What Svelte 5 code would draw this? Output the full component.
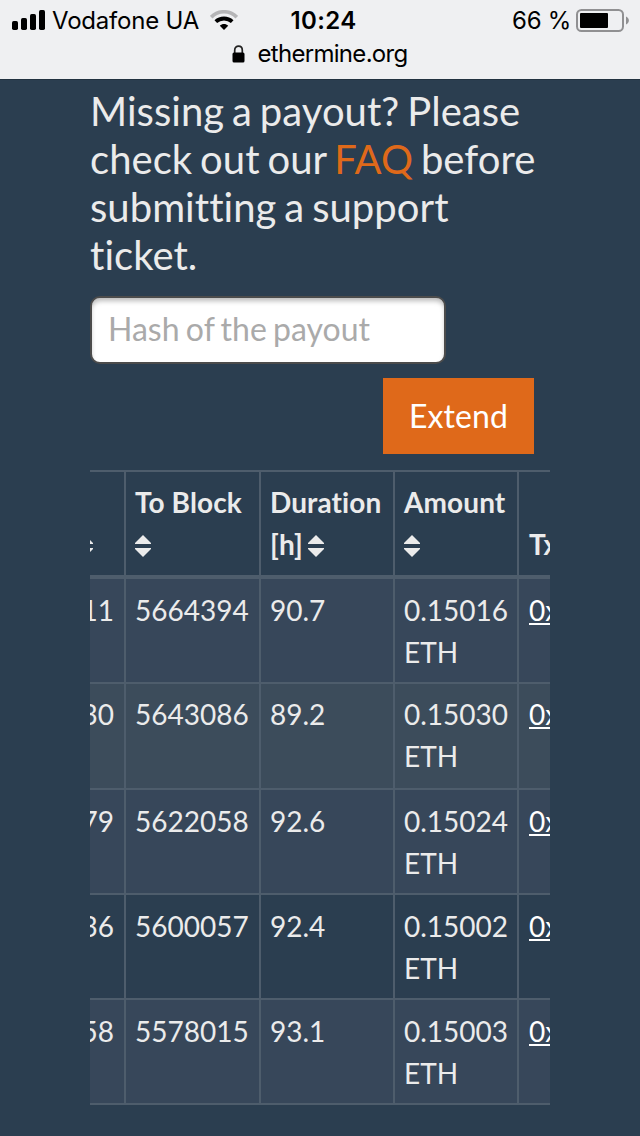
<script>
  const rows = [
    { from: "11", to: "5664394", duration: "90.7", amount: "0.15016", shade: "odd" },
    { from: "30", to: "5643086", duration: "89.2", amount: "0.15030", shade: "hovered" },
    { from: "79", to: "5622058", duration: "92.6", amount: "0.15024", shade: "odd" },
    { from: "36", to: "5600057", duration: "92.4", amount: "0.15002", shade: "" },
    { from: "58", to: "5578015", duration: "93.1", amount: "0.15003", shade: "odd" },
  ];

  let hash = "";
</script>

{#snippet sortIcon()}
  <svg class="sort" width="16" height="22" viewBox="0 0 16 22">
    <path d="M8 0L16 8V9H0V8ZM0 13H16V14L8 22L0 14Z" fill="#ebebeb" />
  </svg>
{/snippet}

<header>
  <div class="status">
    <div class="carrier">
      <svg width="34" height="20" viewBox="0 0 34 20">
        <rect x="0" y="11" width="6" height="9" rx="1.7" />
        <rect x="9" y="8" width="6" height="12" rx="1.7" />
        <rect x="18" y="4" width="6" height="16" rx="1.7" />
        <rect x="27" y="0" width="6" height="20" rx="1.7" />
      </svg>
      <span class="carrierName">Vodafone UA</span>
      <svg class="wifi" width="28" height="20" viewBox="0 0 28 20">
        <path d="M1.2 7.2C8.2 -.1 19.8 -.1 26.8 7.2" fill="none" stroke="#b5b5b7" stroke-width="3.6" />
        <path d="M5.8 11.7C10.4 7.4 17.6 7.4 22.2 11.7" fill="none" stroke="#000" stroke-width="3.8" />
        <path d="M9.8 15.8C12.2 13.5 15.8 13.5 18.2 15.8L14 20Z" />
      </svg>
    </div>
    <span class="time">10:24</span>
    <div class="power">
      <span class="percent">66 %</span>
      <svg width="53" height="23" viewBox="0 0 53 23">
        <rect x="1" y="1" width="46" height="21" rx="4.5" fill="none" stroke="#909092" stroke-width="2" />
        <rect x="4" y="4" width="28" height="15" rx="1" />
        <path d="M50 7.5C53.8 9 53.8 14 50 15.5Z" fill="#909092" />
      </svg>
    </div>
  </div>
  <div class="address">
    <svg width="13" height="18" viewBox="0 0 13 18">
      <path d="M2.7 9V5.2C2.7-.2 10.3-.2 10.3 5.2V9" fill="none" stroke="#222" stroke-width="1.7" />
      <rect x="0.5" y="7.5" width="12" height="10" rx="1.5" />
    </svg>
    <span>ethermine.org</span>
  </div>
</header>

<main>
  <p class="hint">
    Missing a payout? Please<br />check out our <a href="#faq">FAQ</a> before<br />submitting a support<br />ticket.
  </p>
  <input class="hash" type="text" placeholder="Hash of the payout" bind:value={hash} />
  <div class="actions">
    <button class="extend">Extend</button>
  </div>

  <div class="payouts">
    <div class="row head">
      <div class="cell from">{@render sortIcon()}</div>
      <div class="cell">To Block<br />{@render sortIcon()}</div>
      <div class="cell">Duration<br />[h]<span class="gap"></span>{@render sortIcon()}</div>
      <div class="cell">Amount<br />{@render sortIcon()}</div>
      <div class="cell">Tx</div>
    </div>
    {#each rows as row}
      <div class="row {row.shade}">
        <div class="cell from">{row.from}</div>
        <div class="cell">{row.to}</div>
        <div class="cell">{row.duration}</div>
        <div class="cell">{row.amount}<br />ETH</div>
        <div class="cell"><a class="tx" href="#tx">0x</a></div>
      </div>
    {/each}
  </div>
</main>

<style>
  :global(body) {
    background-color: #2b3e50;
    color: #ebebeb;
    font-family: Lato, sans-serif;
    font-variant-ligatures: none;
    overflow: hidden;
  }

  header {
    box-sizing: border-box;
    height: 80px;
    background-color: #eff0f2;
    border-bottom: 1px solid #223240;
    color: #000;
    font-family: Inter, sans-serif;
    font-size: 24px;
  }
  .status {
    display: grid;
    grid-template-columns: 1fr auto 1fr;
    align-items: center;
    height: 40px;
    padding: 0 11px 0 12px;
  }
  .carrier,
  .power,
  .address {
    display: flex;
    align-items: center;
  }
  .carrierName {
    margin-left: 6px;
    letter-spacing: -0.2px;
  }
  .wifi {
    margin-left: 11px;
  }
  .time {
    font-weight: 600;
    letter-spacing: 0.4px;
    transform: translateX(3px);
  }
  .power {
    justify-content: flex-end;
    gap: 6px;
  }
  .percent {
    letter-spacing: -0.3px;
    margin-right: -1px;
  }
  .address {
    justify-content: center;
    gap: 12px;
    height: 27px;
    letter-spacing: -0.7px;
  }

  main {
    padding: 7px 90px 0;
  }
  .hint {
    margin: 0;
    font-size: 40px;
    line-height: 48px;
    letter-spacing: 0.05px;
    white-space: nowrap;
    word-spacing: -2.4px;
  }
  .hint a {
    color: #df691a;
    text-decoration: none;
  }
  .hash {
    display: block;
    box-sizing: border-box;
    width: 356px;
    height: 68px;
    margin-top: 17px;
    padding: 0 16px 4px;
    border: 2px solid #4c4c4c;
    border-radius: 10px;
    background-color: #fff;
    box-shadow: inset 0 4px 5px -1px #bbb;
    font-family: inherit;
    font-size: 32px;
    word-spacing: -1.9px;
    outline: none;
  }
  .hash::placeholder {
    color: #aaa;
    opacity: 1;
  }
  .actions {
    display: flex;
    justify-content: flex-end;
    padding: 14px 16px 16px 0;
  }
  .extend {
    width: 151px;
    height: 76px;
    padding: 0 0 2px 0;
    border: none;
    background-color: #df691a;
    color: #fff;
    font-family: inherit;
    font-size: 32px;
    letter-spacing: 0.1px;
  }

  .payouts {
    width: 460px;
    overflow: hidden;
    border-top: 2px solid #4e5d6c;
    font-size: 28px;
    line-height: 42px;
  }
  .row {
    display: grid;
    grid-template-columns: 34px 135px 134px 124px 33px;
    box-sizing: border-box;
    height: 105px;
    border-bottom: 2px solid #4e5d6c;
  }
  .row.odd {
    background-color: #37475a;
  }
  .row.hovered {
    height: 106px;
    background-color: #3c4c5b;
  }
  .row.head {
    height: 107px;
    border-bottom-width: 4px;
    font-weight: bold;
    letter-spacing: 0.1px;
  }
  .cell {
    padding: 10px 0 0 9px;
    border-left: 2px solid #4e5d6c;
    white-space: nowrap;
  }
  .hovered .cell {
    padding-top: 9px;
  }
  .cell:last-child {
    padding-left: 10px;
  }
  .cell.from {
    display: flex;
    justify-content: flex-end;
    padding-left: 0;
    padding-right: 10px;
    border-left: none;
  }
  .head .cell {
    padding-top: 9px;
  }
  .head .cell.from {
    display: block;
  }
  .head .cell:last-child,
  .head .cell.from {
    padding-top: 51px;
  }
  .head .cell.from .sort {
    margin-left: -13px;
  }
  .sort {
    vertical-align: -2px;
  }
  .gap {
    display: inline-block;
    width: 5px;
  }
  .tx {
    color: #fff;
    text-decoration: underline;
  }
</style>
